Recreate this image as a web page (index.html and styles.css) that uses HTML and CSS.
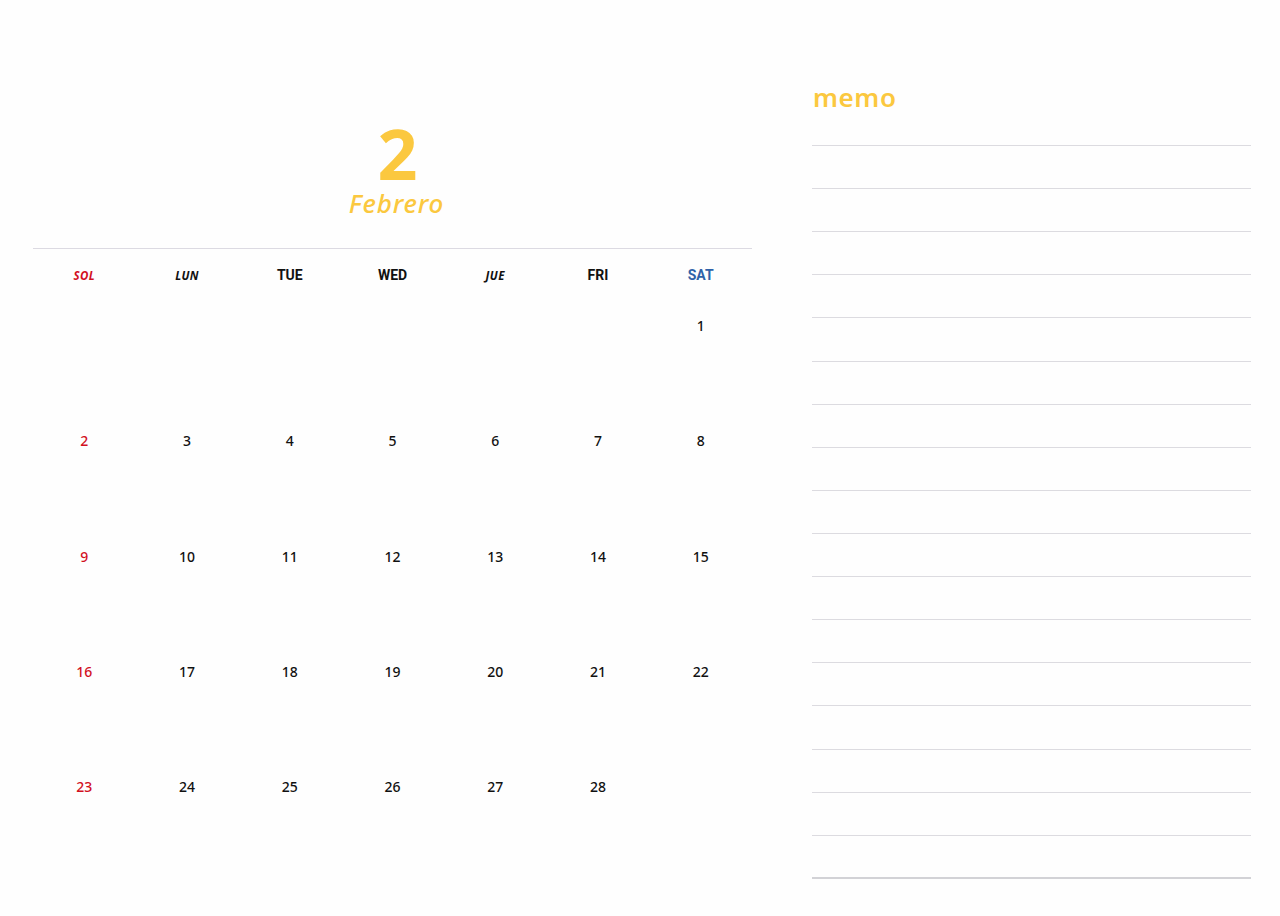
FILE: index.html
```html
<!DOCTYPE html>
<html lang="es">
<head>
<meta charset="utf-8">
<title>Febrero</title>
<link rel="stylesheet" href="styles.css">
</head>
<body>
<div class="page">
  <section class="calendar">
    <div class="title">
      <div class="month-num">2</div>
      <div class="month-name">Febrero</div>
    </div>
    <div class="grid head">
      <div class="dow sun script">SOL</div>
      <div class="dow script">LUN</div>
      <div class="dow">TUE</div>
      <div class="dow">WED</div>
      <div class="dow script">JUE</div>
      <div class="dow">FRI</div>
      <div class="dow sat">SAT</div>
    </div>
    <div class="grid week">
      <div class="day"></div><div class="day"></div><div class="day"></div><div class="day"></div><div class="day"></div><div class="day"></div><div class="day">1</div>
    </div>
    <div class="grid week">
      <div class="day sun">2</div><div class="day">3</div><div class="day">4</div><div class="day">5</div><div class="day">6</div><div class="day">7</div><div class="day">8</div>
    </div>
    <div class="grid week">
      <div class="day sun">9</div><div class="day">10</div><div class="day">11</div><div class="day">12</div><div class="day">13</div><div class="day">14</div><div class="day">15</div>
    </div>
    <div class="grid week">
      <div class="day sun">16</div><div class="day">17</div><div class="day">18</div><div class="day">19</div><div class="day">20</div><div class="day">21</div><div class="day">22</div>
    </div>
    <div class="grid week">
      <div class="day sun">23</div><div class="day">24</div><div class="day">25</div><div class="day">26</div><div class="day">27</div><div class="day">28</div><div class="day"></div>
    </div>
  </section>
  <section class="memo">
    <div class="memo-title">memo</div>
    <div class="line"></div><div class="line"></div><div class="line"></div><div class="line"></div>
    <div class="line"></div><div class="line"></div><div class="line"></div><div class="line"></div>
    <div class="line"></div><div class="line"></div><div class="line"></div><div class="line"></div>
    <div class="line"></div><div class="line"></div><div class="line"></div><div class="line"></div>
    <div class="line last"></div>
  </section>
</div>
</body>
</html>
```
FILE: styles.css
```css
html, body {
  margin: 0;
  padding: 0;
  background: #fefefe;
}
body {
  width: 1280px;
  height: 916px;
  overflow: hidden;
  font-family: "Noto Sans", "Liberation Sans", sans-serif;
  color: #111;
}
.page {
  display: flex;
  gap: 60px;
  padding-left: 33px;
}
.calendar {
  width: 719px;
}
.title {
  padding-top: 118px;
  height: 130px;
  text-align: center;
  color: #fbc83f;
  border-bottom: 1px solid #dcdae2;
}
.month-num {
  font-size: 70px;
  line-height: 70px;
  font-weight: 700;
  padding-left: 10px;
}
.month-name {
  font-size: 26px;
  line-height: 30px;
  font-style: italic;
  font-weight: 500;
  letter-spacing: 0.8px;
  padding-left: 8px;
}
.grid {
  display: grid;
  grid-template-columns: repeat(7, 1fr);
}
.head {
  padding-top: 16px;
  height: 31px;
}
.dow {
  text-align: center;
  font-size: 14px;
  line-height: 20px;
  font-weight: 700;
  font-family: "Roboto", "Noto Sans", sans-serif;
  color: #111;
}
.dow.script {
  font-size: 11.5px;
  font-style: italic;
  font-family: "Noto Sans", sans-serif;
  font-weight: 700;
  letter-spacing: 0.4px;
  padding-top: 1px;
}
.dow.sun { color: #d2101e; }
.dow.sat { color: #2f62a8; }
.week {
  height: 115.25px;
}
.day {
  padding-top: 20px;
  text-align: center;
  font-size: 14px;
  line-height: 20px;
  font-weight: 500;
  color: #111;
}
.day.sun { color: #d2101e; }
.memo {
  width: 439px;
}
.memo-title {
  padding-top: 81px;
  height: 64px;
  font-size: 26px;
  line-height: 32px;
  font-weight: 600;
  color: #fbc83f;
  letter-spacing: 0.6px;
  padding-left: 1px;
  border-bottom: 1px solid #dcdbe0;
}
.line {
  height: 43.12px;
  box-sizing: border-box;
  border-bottom: 1px solid #dcdbe0;
}
.line.last {
  border-bottom: 2px solid #d2d2d6;
  height: 43.6px;
}
```
